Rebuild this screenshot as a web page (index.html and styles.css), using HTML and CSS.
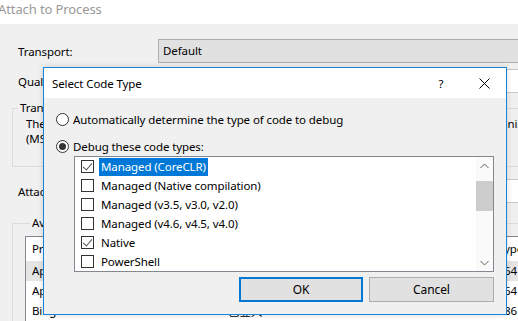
FILE: index.html
```html
<!DOCTYPE html>
<html lang="en">
<head>
    <meta charset="UTF-8">
    <title>Attach to Process</title>
    <link rel="stylesheet" href="styles.css">
</head>
<body>

<div class="window">
    <div class="window-title">Attach to Process</div>
    <div class="window-body">
        <div class="form-row">
            <label>Transport:</label>
            <div class="combo">Default</div>
        </div>
        <div class="form-row qualifier">
            <label>Qualifier:</label>
            <div class="field"></div>
        </div>
        <fieldset class="group info">
            <legend>Transport Information</legend>
            <p>The default transport lets you select processes on this computer or a remote computer running the Remote Debugger in</p>
            <p>(MSVSMON.EXE).</p>
        </fieldset>
        <div class="form-row attach">
            <label>Attach to:</label>
            <div class="field">Automatic: Native code</div>
        </div>
        <fieldset class="group procs">
            <legend>Available Processes</legend>
            <div class="list-view">
                <div class="list-row header">
                    <span>Process</span><span>ID</span><span>Title</span><span>Type</span>
                </div>
                <div class="list-row selected">
                    <span>ApplicationFrameHost.exe</span><span>7456</span><span>Settings</span><span>x64</span>
                </div>
                <div class="list-row">
                    <span>AppVShNotify.exe</span><span>9620</span><span></span><span>x64</span>
                </div>
                <div class="list-row">
                    <span>BingSvc.exe</span><span>6168</span><span class="cjk">已登入</span><span>x86</span>
                </div>
            </div>
        </fieldset>
    </div>
</div>

<div class="dialog">
    <div class="dialog-title">
        <span>Select Code Type</span>
        <span class="help">?</span>
        <span class="close">
            <svg width="11" height="11" viewBox="0 0 11 11"><path d="M0.5 0.5 L10.5 10.5 M10.5 0.5 L0.5 10.5" stroke="#000" stroke-width="1" fill="none"/></svg>
        </span>
    </div>
    <div class="dialog-body">
        <div class="option"><span class="radio"></span>Automatically determine the type of code to debug</div>
        <div class="option second"><span class="radio checked"></span>Debug these code types:</div>
        <div class="code-list">
            <div class="items">
                <div class="item"><span class="check on"></span><span class="text active">Managed (CoreCLR)</span></div>
                <div class="item"><span class="check"></span><span class="text">Managed (Native compilation)</span></div>
                <div class="item"><span class="check"></span><span class="text">Managed (v3.5, v3.0, v2.0)</span></div>
                <div class="item"><span class="check"></span><span class="text">Managed (v4.6, v4.5, v4.0)</span></div>
                <div class="item"><span class="check on"></span><span class="text">Native</span></div>
                <div class="item"><span class="check"></span><span class="text">PowerShell</span></div>
            </div>
            <div class="scrollbar">
                <div class="arrow">
                    <svg width="9" height="6" viewBox="0 0 9 6"><path d="M0.5 5 L4.5 1 L8.5 5" stroke="#606060" fill="none"/></svg>
                </div>
                <div class="track"><div class="thumb"></div></div>
                <div class="arrow">
                    <svg width="9" height="6" viewBox="0 0 9 6"><path d="M0.5 1 L4.5 5 L8.5 1" stroke="#606060" fill="none"/></svg>
                </div>
            </div>
        </div>
        <div class="buttons">
            <button class="default">OK</button>
            <button>Cancel</button>
        </div>
    </div>
</div>

</body>
</html>
```

FILE: styles.css
```css
body {
    margin: 0;
    width: 518px;
    height: 321px;
    overflow: hidden;
    position: relative;
    background: #f0f0f0;
    font-family: "Noto Sans", sans-serif;
    font-size: 11.5px;
    letter-spacing: -0.1px;
    color: #000;
}

/* background window */
.window-title {
    height: 24px;
    background: #fff;
    color: #999;
    font-size: 13px;
    line-height: 18px;
    text-indent: -2px;
    white-space: nowrap;
}

.window-body {
    padding: 15px 0 0 12px;
}

.form-row {
    display: flex;
    align-items: center;
    padding-left: 6px;
}

.form-row label {
    width: 140px;
    flex: none;
}

.combo,
.field {
    flex: none;
    width: 400px;
    height: 24px;
    box-sizing: border-box;
    line-height: 22px;
    padding-left: 4px;
}

.combo {
    border: 1px solid #adadad;
    background: #e1e1e1;
}

.field {
    border: 1px solid #c8c8c8;
    background: #fff;
}

.qualifier {
    margin-top: 6px;
}

.group {
    width: 640px;
    margin: 7px 0 0 0;
    padding: 0;
    border: 1px solid #dcdcdc;
    box-sizing: border-box;
}

.group legend {
    padding: 0 2px;
    margin-left: 5px;
    line-height: 16px;
}

.info p {
    margin: 0 0 0 13px;
    line-height: 15px;
    white-space: nowrap;
}

.info {
    padding-bottom: 20px;
}

.attach {
    margin-top: 12px;
}

.procs {
    margin-top: 12px;
    padding: 5px 0 0 12px;
}

.list-view {
    width: 620px;
    background: #fff;
    border: 1px solid #828790;
}

.list-row {
    display: grid;
    grid-template-columns: 133px 63px 270px 60px;
    height: 20px;
    line-height: 20px;
    white-space: nowrap;
}

.list-row span {
    padding-left: 6px;
    overflow: hidden;
}

.list-row.header {
    height: 24px;
    line-height: 24px;
}

.list-row.header span {
    border-right: 1px solid #e5e5e5;
}

.list-row.selected {
    background: #e5e5e5;
}

.cjk {
    font-family: "Noto Sans CJK SC", sans-serif;
}

/* modal dialog on top */
.dialog {
    position: absolute;
    left: 43px;
    top: 67px;
    width: 464px;
    height: 248px;
    box-sizing: border-box;
    border: 1px solid #1883d7;
    background: #f0f0f0;
    box-shadow: 0 0 6px rgba(0, 0, 0, 0.15);
}

.dialog-title {
    display: flex;
    align-items: center;
    height: 30px;
    padding-left: 8px;
    background: #fff;
}

.help {
    margin-left: auto;
    width: 42px;
    text-align: center;
}

.close {
    width: 44px;
    height: 30px;
    display: flex;
    align-items: center;
    justify-content: center;
}

.dialog-body {
    padding: 13px 12px 0 12px;
}

.option {
    display: flex;
    align-items: center;
    height: 16px;
}

.option.second {
    margin-top: 11px;
}

.radio {
    width: 13px;
    height: 13px;
    box-sizing: border-box;
    border: 1px solid #333;
    border-radius: 50%;
    background: #fff;
    margin-right: 4px;
    position: relative;
}

.radio.checked::after {
    content: "";
    position: absolute;
    left: 2px;
    top: 2px;
    width: 7px;
    height: 7px;
    border-radius: 50%;
    background: #333;
}

.code-list {
    display: flex;
    margin: 2px 0 0 18px;
    width: 420px;
    height: 116px;
    box-sizing: border-box;
    border: 1px solid #828790;
    background: #fff;
}

.items {
    flex: 1;
}

.item {
    display: flex;
    align-items: center;
    height: 19px;
    padding-left: 6px;
}

.check {
    width: 13px;
    height: 13px;
    box-sizing: border-box;
    border: 1px solid #333;
    background: #fff;
    margin-right: 5px;
    position: relative;
}

.check.on::after {
    content: "";
    position: absolute;
    left: 3px;
    top: 0px;
    width: 4px;
    height: 8px;
    border: solid #555;
    border-width: 0 1px 1px 0;
    transform: rotate(40deg);
}

.item .text {
    padding: 0 2px;
    line-height: 18px;
}

.item .text.active {
    background: #0078d7;
    color: #fff;
}

.scrollbar {
    width: 17px;
    display: flex;
    flex-direction: column;
    background: #fafafa;
}

.arrow {
    height: 17px;
    display: flex;
    align-items: center;
    justify-content: center;
}

.track {
    flex: 1;
    padding-top: 7px;
}

.thumb {
    height: 30px;
    background: #cdcdcd;
}

.buttons {
    display: flex;
    justify-content: flex-end;
    gap: 6px;
    margin: 5px 0 0 0;
}

button {
    width: 125px;
    height: 25px;
    box-sizing: border-box;
    border: 1px solid #adadad;
    background: #e1e1e1;
    font-family: inherit;
    font-size: 12px;
    letter-spacing: inherit;
    padding: 0;
}

button.default {
    width: 124px;
    border: 2px solid #0078d7;
}
```
